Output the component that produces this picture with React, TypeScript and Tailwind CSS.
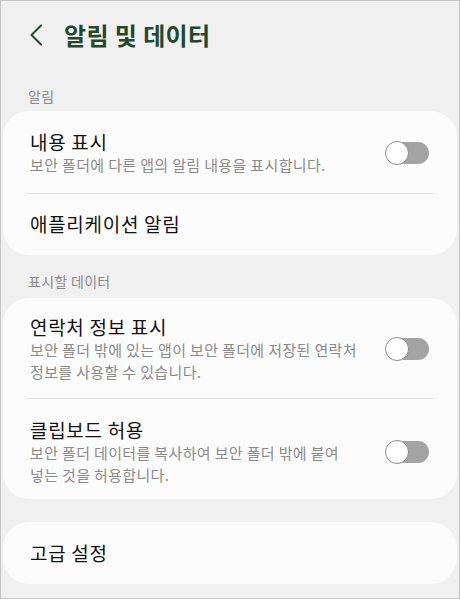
const font = "font-['Noto_Sans_CJK_KR','Noto_Sans',sans-serif]";

function Toggle() {
  return (
    <div className="relative w-[44px] h-[24px] shrink-0">
      <div className="absolute left-[6px] right-0 top-[1px] h-[22px] rounded-full bg-[#a3a3a3]" />
      <div className="absolute left-0 top-0 w-[24px] h-[24px] rounded-full bg-white border-[1.5px] border-[#8c8c8c]" />
    </div>
  );
}

function ToggleRow({ title, sub, pt, pb }: { title: string; sub: string; pt: string; pb: string }) {
  return (
    <div className={`flex items-center pl-[27px] pr-[28px] ${pt} ${pb}`}>
      <div className="flex-1 min-w-0 pr-[18px]">
        <div className="text-[19px] leading-[24px] tracking-[0.7px] text-[#111]">{title}</div>
        <div className="text-[15px] leading-[22px] tracking-[0.35px] text-[#8a8a8a] break-keep">{sub}</div>
      </div>
      <Toggle />
    </div>
  );
}

function Divider() {
  return <div className="mx-[23px] h-px bg-[#e4e4e4]" />;
}

export default function App() {
  return (
    <div className={`${font} w-[460px] h-[599px] bg-[#f0f0f0] border border-[#c4c4c4] overflow-hidden`}>
      {/* header */}
      <div className="flex items-center h-[67px] pl-[28px]">
        <svg width="14" height="22" viewBox="0 0 14 22" className="shrink-0">
          <path d="M12 1.5 L2.5 11 L12 20.5" fill="none" stroke="#234a2f" strokeWidth="2" strokeLinecap="round" strokeLinejoin="round" />
        </svg>
        <h1 className="ml-[21px] text-[24px] font-bold tracking-[0.4px] text-[#22482c] leading-none">알림 및 데이터</h1>
      </div>

      <div className="pl-[27px] pt-[18px] pb-[5px] text-[14px] leading-[20px] tracking-[0.3px] text-[#8a8a8a]">알림</div>
      <div className="mx-[2px] rounded-[26px] bg-[#fcfcfc]">
        <ToggleRow title="내용 표시" sub="보안 폴더에 다른 앱의 알림 내용을 표시합니다." pt="pt-[19px]" pb="pb-[17px]" />
        <Divider />
        <div className="flex items-center h-[61px] pl-[27px] text-[19px] tracking-[0.7px] text-[#111]">애플리케이션 알림</div>
      </div>

      <div className="pl-[27px] pt-[16px] pb-[7px] text-[14px] leading-[20px] tracking-[0.3px] text-[#8a8a8a]">표시할 데이터</div>
      <div className="mx-[2px] rounded-[26px] bg-[#fcfcfc]">
        <ToggleRow title="연락처 정보 표시" sub="보안 폴더 밖에 있는 앱이 보안 폴더에 저장된 연락처 정보를 사용할 수 있습니다." pt="pt-[17px]" pb="pb-[15px]" />
        <Divider />
        <ToggleRow title="클립보드 허용" sub="보안 폴더 데이터를 복사하여 보안 폴더 밖에 붙여 넣는 것을 허용합니다." pt="pt-[19px]" pb="pb-[13px]" />
      </div>

      <div className="mt-[23px] mx-[2px] rounded-[26px] bg-[#fcfcfc] flex items-center h-[62px] pl-[27px] text-[19px] tracking-[0.7px] text-[#111]">
        고급 설정
      </div>
    </div>
  );
}
